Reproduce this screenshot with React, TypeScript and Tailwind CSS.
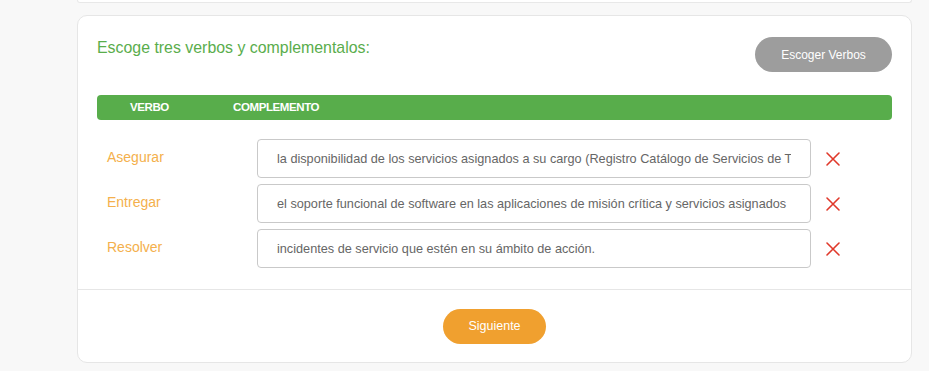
import React from "react";

const rows = [
  {
    verbo: "Asegurar",
    complemento:
      "la disponibilidad de los servicios asignados a su cargo (Registro Catálogo de Servicios de TI)",
  },
  {
    verbo: "Entregar",
    complemento:
      "el soporte funcional de software en las aplicaciones de misión crítica y servicios asignados",
  },
  {
    verbo: "Resolver",
    complemento: "incidentes de servicio que estén en su ámbito de acción.",
  },
];

function RemoveIcon() {
  return (
    <svg width="16" height="16" viewBox="0 0 16 16" className="text-[#e0392b]">
      <path d="M2 2 L14 14 M14 2 L2 14" stroke="currentColor" strokeWidth="1.6" strokeLinecap="round" />
    </svg>
  );
}

export default function App() {
  return (
    <div className="min-h-[371px] bg-[#f8f8f8] font-['Liberation_Sans',Arial,sans-serif]">
      <div className="ml-[77px] w-[835px]">
        {/* tail of the previous card */}
        <div className="h-[3px] bg-white border-x border-b border-[#e8e8e8] rounded-b-[8px]"></div>

        <div className="mt-[12px] bg-white border border-[#e6e6e6] rounded-[10px]">
          <div className="px-[19px] pt-[21px] pb-[21px]">
            <div className="flex justify-between items-start">
              <h2 className="mt-[1px] text-[15.9px] leading-[20px] text-[#5aad4c]">
                Escoge tres verbos y complementalos:
              </h2>
              <button className="h-[35px] w-[137px] rounded-full bg-[#9d9d9d] text-white text-[12px]">
                Escoger Verbos
              </button>
            </div>

            <div className="mt-[23px] h-[25px] flex items-center rounded-[4px] bg-[#58ad4b] text-white text-[11.5px] font-bold tracking-[-0.4px]">
              <span className="ml-[33px] w-[103px]">VERBO</span>
              <span>COMPLEMENTO</span>
            </div>

            <div className="mt-[19px] flex flex-col gap-[6px]">
              {rows.map((row) => (
                <div key={row.verbo} className="flex items-center">
                  <span className="w-[160px] pl-[10px] pb-[2px] text-[14px] text-[#f4b04c]">{row.verbo}</span>
                  <input
                    readOnly
                    value={row.complemento}
                    className="w-[554px] h-[39px] px-[19px] rounded-[4px] border border-[#c9c9c9] text-[12.7px] text-[#666] outline-none"
                  />
                  <span className="ml-[14px] flex items-center">
                    <RemoveIcon />
                  </span>
                </div>
              ))}
            </div>
          </div>

          <div className="border-t border-[#e6e6e6] pt-[19px] pb-[18px] flex justify-center">
            <button className="h-[35px] w-[103px] rounded-full bg-[#f0a02f] text-white text-[12.5px]">
              Siguiente
            </button>
          </div>
        </div>
      </div>
    </div>
  );
}
